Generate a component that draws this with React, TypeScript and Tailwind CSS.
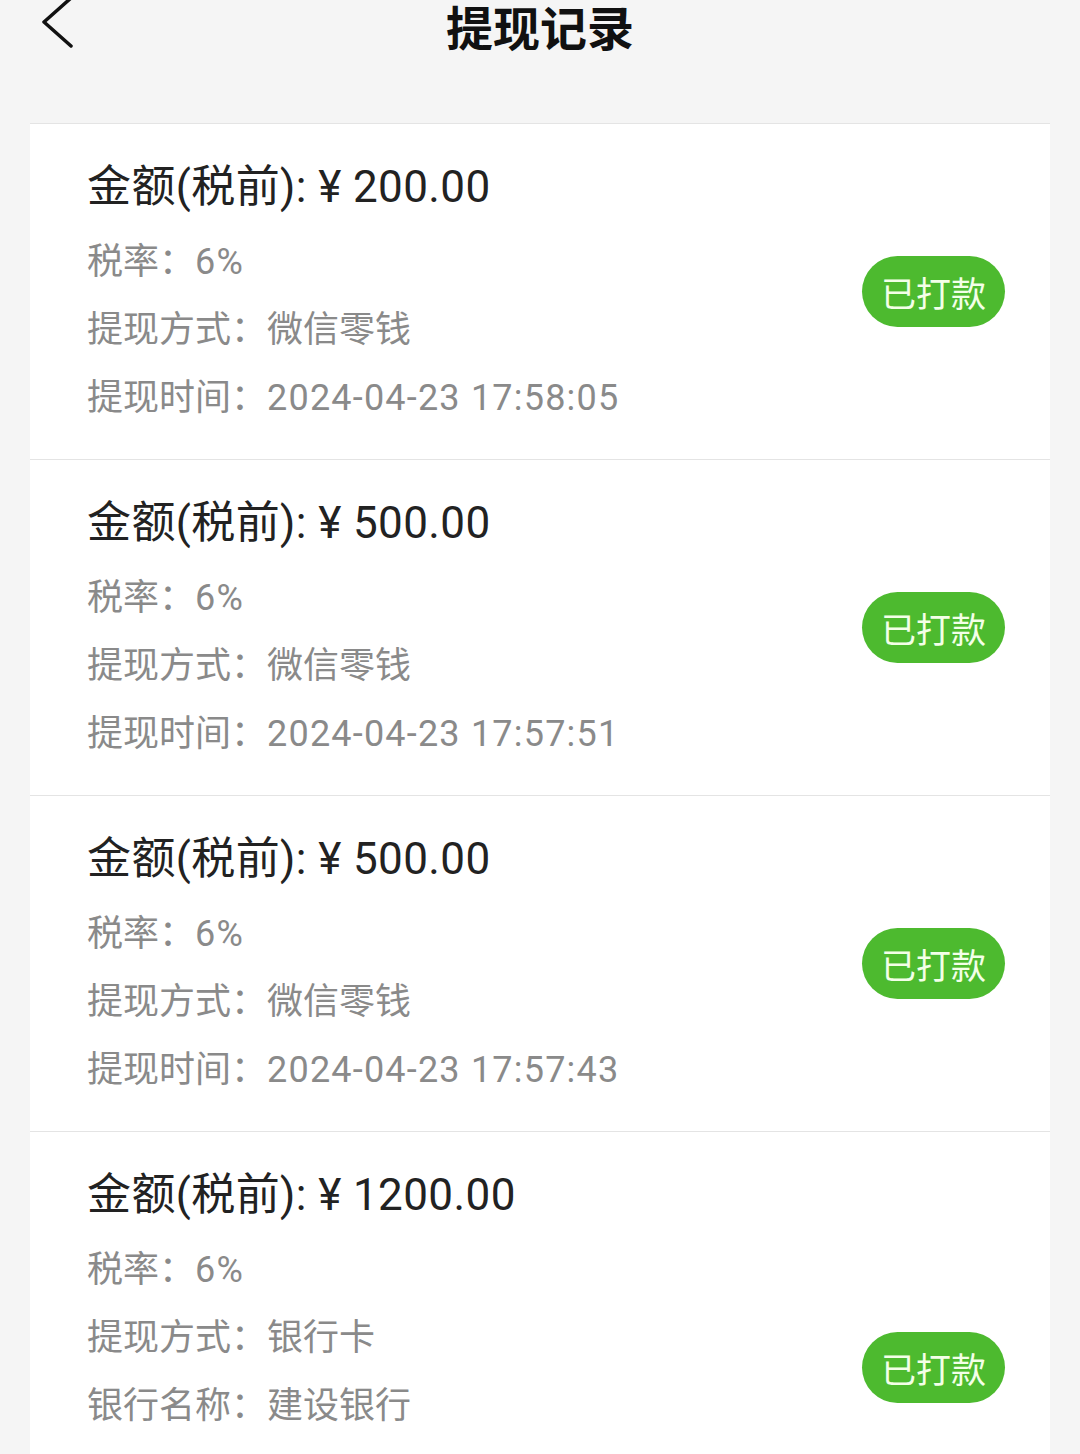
import React from "react";

type Record = {
    amount: string;
    method: string;
    bank?: string;
    cardNo?: string;
    time: string;
};

const records: Record[] = [
    { amount: "200.00", method: "微信零钱", time: "2024-04-23 17:58:05" },
    { amount: "500.00", method: "微信零钱", time: "2024-04-23 17:57:51" },
    { amount: "500.00", method: "微信零钱", time: "2024-04-23 17:57:43" },
    {
        amount: "1200.00",
        method: "银行卡",
        bank: "建设银行",
        cardNo: "6217 **** **** 0000",
        time: "2024-04-23 17:57:30",
    },
];

function InfoRow({ label, value, numeric }: { label: string; value: string; numeric?: boolean }) {
    return (
        <div className="h-[68px] flex items-center text-[36px] text-[#8a8a8a] leading-none">
            <span>{label}：</span>
            <span className={numeric ? "tracking-[1.2px]" : ""}>{value}</span>
        </div>
    );
}

export default function App() {
    return (
        <div
            className="h-[1454px] overflow-hidden bg-[#f5f5f5] px-[30px]"
            style={{ fontFamily: 'Roboto, "Noto Sans CJK SC", sans-serif' }}
        >
            {/* Header */}
            <div className="grid grid-cols-[1fr_auto_1fr] items-center h-[50px] -mx-[30px]">
                <div className="pl-[40px] flex items-center">
                    <svg width="34" height="52" viewBox="0 0 34 52" fill="none" className="-mt-[6px]">
                        <path d="M31 2 L4 26 L31 50" stroke="#111" strokeWidth="3.5" strokeLinecap="round" strokeLinejoin="round" />
                    </svg>
                </div>
                <h1
                    className="text-[47px] font-bold text-[#111] leading-none"
                    style={{ fontFamily: '"Noto Sans CJK SC", sans-serif' }}
                >
                    提现记录
                </h1>
                <div />
            </div>

            <div className="mt-[73px]">
                {records.map((r, i) => (
                    <div
                        key={i}
                        className="bg-white border-t border-[#e4e4e4] pt-[33px] pb-[27px] pl-[57px] pr-[45px] flex items-center justify-between"
                    >
                        <div>
                            <div className="h-[60px] flex items-center text-[44px] text-[#222] leading-none tracking-[0.4px]">
                                金额(税前): ¥ {r.amount}
                            </div>
                            <div className="mt-[11px]">
                                <InfoRow label="税率" value="6%" numeric />
                                <InfoRow label="提现方式" value={r.method} />
                                {r.bank && <InfoRow label="银行名称" value={r.bank} />}
                                {r.cardNo && <InfoRow label="银行卡号" value={r.cardNo} numeric />}
                                <InfoRow label="提现时间" value={r.time} numeric />
                            </div>
                        </div>
                        <div
                            className="w-[143px] h-[71px] mb-[7px] rounded-full bg-[#4dba2f] flex items-center justify-center text-[35px] text-[#f3ffe8] leading-none"
                            style={{ fontFamily: '"Noto Sans CJK SC", sans-serif' }}
                        >
                            已打款
                        </div>
                    </div>
                ))}
            </div>
        </div>
    );
}
